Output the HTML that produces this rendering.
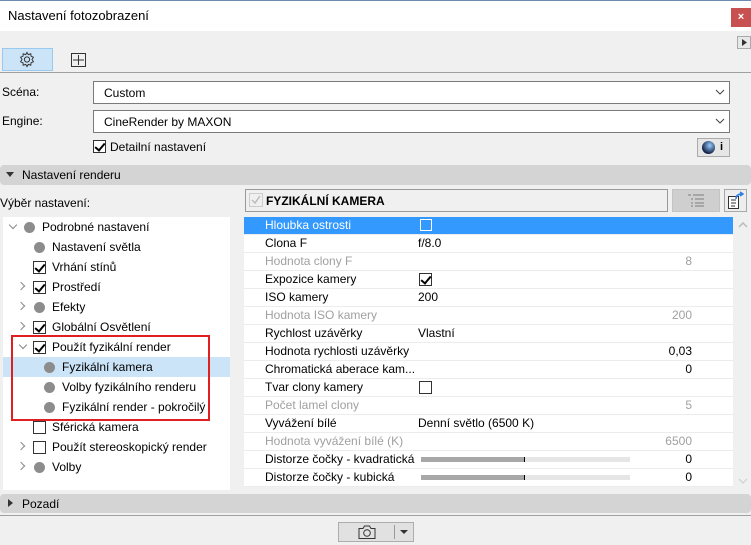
<!DOCTYPE html>
<html><head><meta charset="utf-8"><style>
*{margin:0;padding:0;box-sizing:border-box}
body{width:751px;height:545px;background:#f0f0f0;font-family:"Liberation Sans","DejaVu Sans",sans-serif;font-size:12px;color:#000;position:relative;overflow:hidden}
.a{position:absolute}
.dd{position:absolute;left:93px;width:637px;height:23px;background:#fff;border:1px solid #7a7a7a;padding:4px 0 0 10px}
.dd svg{position:absolute;right:4px;top:7px}
.cb{position:absolute;width:13px;height:13px;border:1px solid #333;background:#fff}
.cb.k::after{content:"";position:absolute;left:3px;top:0px;width:4px;height:8px;border:solid #000;border-width:0 2px 2px 0;transform:rotate(40deg)}
.dot{position:absolute;width:11px;height:11px;border-radius:50%;background:#8c8c8c}
.chev{position:absolute;width:6px;height:6px;border:solid #888;border-width:0 1.5px 1.5px 0}
.tr{position:absolute;height:20px;line-height:20px}
.row{position:absolute;left:244px;width:489px;height:18px;border-bottom:1px solid #ececec;line-height:17px}
.row .l{position:absolute;left:21px}
.row .v{position:absolute;left:174px}
.row .r{position:absolute;right:41px}
.g{color:#a0a0a0}
</style></head><body>
<div class="a" style="left:0;top:0;width:751px;height:1px;background:#6b8cae"></div>
<div class="a" style="left:0;top:1px;width:751px;height:30px;background:#fff"></div>
<div class="a" style="left:8px;top:8px;font-size:13px">Nastavení fotozobrazení</div>
<div class="a" style="left:731px;top:8px;width:20px;height:19px;background:#c75050;color:#fff;font-weight:bold;text-align:center;line-height:18px;font-size:11px">×</div>
<div class="a" style="left:737px;top:36px;width:14px;height:13px;border:1px solid #aaa;background:#e8e8e8"><svg width="12" height="11"><path d="M4 2 L9 5.5 L4 9Z" fill="#333"/></svg></div>
<div class="a" style="left:2px;top:48px;width:51px;height:23px;background:#cce4f7;border:1px solid #99c9ef"></div>
<svg class="a" style="left:18px;top:51px" width="18" height="17" viewBox="0 0 18 17"><circle cx="9" cy="8.5" r="2.6" fill="none" stroke="#333"/><path d="M9 1.5 L10.3 3.6 12.8 2.8 13 5.2 15.4 6.2 14 8.5 15.4 10.8 13 11.8 12.8 14.2 10.3 13.4 9 15.5 7.7 13.4 5.2 14.2 5 11.8 2.6 10.8 4 8.5 2.6 6.2 5 5.2 5.2 2.8 7.7 3.6Z" fill="none" stroke="#333"/></svg>
<svg class="a" style="left:70px;top:52px" width="18" height="16"><rect x="1.5" y="1.5" width="14" height="13" fill="none" stroke="#333"/><path d="M8.5 3v10M3 8h11" stroke="#333"/></svg>
<div class="a" style="left:0;top:72px;width:751px;height:1px;background:#a0a0a0"></div>
<div class="a" style="left:2px;top:85px">Scéna:</div>
<div class="dd" style="top:81px">Custom<svg width="10" height="6"><path d="M1 1l4 4 4-4" fill="none" stroke="#444"/></svg></div>
<div class="a" style="left:2px;top:114px">Engine:</div>
<div class="dd" style="top:110px">CineRender by MAXON<svg width="10" height="6"><path d="M1 1l4 4 4-4" fill="none" stroke="#444"/></svg></div>
<div class="cb k" style="left:93px;top:140px"></div>
<div class="a" style="left:110px;top:140px">Detailní nastavení</div>
<div class="a" style="left:697px;top:138px;width:33px;height:19px;border:1px solid #aaa;background:#e6e6e6"><div class="a" style="left:4px;top:2px;width:13px;height:13px;border-radius:50%;background:radial-gradient(circle at 60% 35%,#9cf,#124 70%)"></div><div class="a" style="left:22px;top:2px;font-weight:bold;font-size:11px">i</div></div>
<div class="a" style="left:0;top:165px;width:751px;height:20px;background:#d4d4d4;border-radius:4px"></div>
<svg class="a" style="left:6px;top:172px" width="8" height="6"><path d="M0 0h8L4 5z" fill="#333"/></svg>
<div class="a" style="left:22px;top:168px">Nastavení renderu</div>
<div class="a" style="left:0;top:196px">Výběr nastavení:</div>
<div class="a" style="left:245px;top:189px;width:423px;height:23px;border:1px solid #9a9a9a;background:#f0f0f0"></div>
<svg class="a" style="left:249px;top:193px" width="14" height="14"><rect x=".5" y=".5" width="13" height="13" fill="none" stroke="#ccc"/><path d="M3 7l3 3 5-7" fill="none" stroke="#bbb" stroke-width="1.5"/></svg>
<div class="a" style="left:266px;top:194px;font-weight:bold">FYZIKÁLNÍ KAMERA</div>
<div class="a" style="left:672px;top:189px;width:48px;height:23px;background:#cfcfcf;border:1px solid #c4c4c4"></div>
<svg class="a" style="left:688px;top:194px" width="18" height="14"><path d="M0 1h3M5 1h11M3 5h2M7 5h9M3 9h2M7 9h9M3 12h2M7 12h9" stroke="#999" stroke-width="1.5"/></svg>
<div class="a" style="left:724px;top:189px;width:23px;height:23px;border:1px solid #a8a8a8;background:#eee"></div>
<svg class="a" style="left:727px;top:191px" width="18" height="19"><rect x="1.5" y="5.5" width="10" height="12" fill="#fff" stroke="#333"/><path d="M4 9h5M4 12h5M4 15h4" stroke="#333"/><path d="M9 8c0-4 3-5 6-5M13 1l3 2-3 2" fill="none" stroke="#2a7de1" stroke-width="1.5"/></svg>
<!-- tree -->
<div class="a" style="left:3px;top:217px;width:227px;height:273px;background:#fff"></div>
<div class="a" style="left:3px;top:357px;width:227px;height:20px;background:#cce4f7"></div>
<div class="chev" style="left:10px;top:222px;transform:rotate(45deg)"></div><div class="dot" style="left:24px;top:222px"></div><div class="tr" style="left:42px;top:217px">Podrobné nastavení</div>
<div class="dot" style="left:34px;top:242px"></div><div class="tr" style="left:52px;top:237px">Nastavení světla</div>
<div class="cb k" style="left:33px;top:261px"></div><div class="tr" style="left:52px;top:257px">Vrhání stínů</div>
<div class="chev" style="left:18px;top:283px;transform:rotate(-45deg)"></div><div class="cb k" style="left:33px;top:281px"></div><div class="tr" style="left:52px;top:277px">Prostředí</div>
<div class="chev" style="left:18px;top:303px;transform:rotate(-45deg)"></div><div class="dot" style="left:34px;top:302px"></div><div class="tr" style="left:52px;top:297px">Efekty</div>
<div class="chev" style="left:18px;top:323px;transform:rotate(-45deg)"></div><div class="cb k" style="left:33px;top:321px"></div><div class="tr" style="left:52px;top:317px">Globální Osvětlení</div>
<div class="chev" style="left:20px;top:342px;transform:rotate(45deg)"></div><div class="cb k" style="left:33px;top:341px"></div><div class="tr" style="left:52px;top:337px">Použít fyzikální render</div>
<div class="dot" style="left:44px;top:362px"></div><div class="tr" style="left:62px;top:357px">Fyzikální kamera</div>
<div class="dot" style="left:44px;top:382px"></div><div class="tr" style="left:62px;top:377px">Volby fyzikálního renderu</div>
<div class="dot" style="left:44px;top:402px"></div><div class="tr" style="left:62px;top:397px">Fyzikální render - pokročilý</div>
<div class="a" style="left:11px;top:335px;width:199px;height:86px;border:2px solid #e02020"></div>
<div class="cb" style="left:33px;top:421px"></div><div class="tr" style="left:52px;top:417px">Sférická kamera</div>
<div class="chev" style="left:18px;top:443px;transform:rotate(-45deg)"></div><div class="cb" style="left:33px;top:441px"></div><div class="tr" style="left:52px;top:437px">Použít stereoskopický render</div>
<div class="chev" style="left:18px;top:463px;transform:rotate(-45deg)"></div><div class="dot" style="left:34px;top:462px"></div><div class="tr" style="left:52px;top:457px">Volby</div>
<!-- props -->
<div class="a" style="left:244px;top:217px;width:489px;height:270px;background:#fff"></div>
<div class="row" style="top:217px;background:#3399ff;color:#fff"><span class="l">Hloubka ostrosti</span><span class="a" style="left:176px;top:2px;width:12px;height:12px;border:1px solid #fff"></span></div>
<div class="row" style="top:235px"><span class="l">Clona F</span><span class="v">f/8.0</span></div>
<div class="row g" style="top:253px"><span class="l">Hodnota clony F</span><span class="r">8</span></div>
<div class="row" style="top:271px"><span class="l">Expozice kamery</span><span class="cb k" style="left:175px;top:2px"></span></div>
<div class="row" style="top:289px"><span class="l">ISO kamery</span><span class="v">200</span></div>
<div class="row g" style="top:307px"><span class="l">Hodnota ISO kamery</span><span class="r">200</span></div>
<div class="row" style="top:325px"><span class="l">Rychlost uzávěrky</span><span class="v">Vlastní</span></div>
<div class="row" style="top:343px"><span class="l">Hodnota rychlosti uzávěrky</span><span class="r">0,03</span></div>
<div class="row" style="top:361px"><span class="l">Chromatická aberace kam...</span><span class="r">0</span></div>
<div class="row" style="top:379px"><span class="l">Tvar clony kamery</span><span class="cb" style="left:175px;top:2px"></span></div>
<div class="row g" style="top:397px"><span class="l">Počet lamel clony</span><span class="r">5</span></div>
<div class="row" style="top:415px"><span class="l">Vyvážení bílé</span><span class="v">Denní světlo (6500 K)</span></div>
<div class="row g" style="top:433px"><span class="l">Hodnota vyvážení bílé (K)</span><span class="r">6500</span></div>
<div class="row" style="top:451px"><span class="l">Distorze čočky - kvadratická</span><span class="a" style="left:177px;top:6px;width:209px;height:5px;background:#e6e6e6"><span class="a" style="left:0;top:0;width:104px;height:5px;background:#a8a8a8;border-right:1px solid #000"></span></span><span class="r">0</span></div>
<div class="row" style="top:469px"><span class="l">Distorze čočky - kubická</span><span class="a" style="left:177px;top:6px;width:209px;height:5px;background:#e6e6e6"><span class="a" style="left:0;top:0;width:104px;height:5px;background:#a8a8a8;border-right:1px solid #000"></span></span><span class="r">0</span></div>
<svg class="a" style="left:738px;top:222px" width="10" height="6"><path d="M1 5l4-4 4 4" fill="none" stroke="#bbb" stroke-width="1.5"/></svg>
<svg class="a" style="left:738px;top:478px" width="10" height="6"><path d="M1 1l4 4 4-4" fill="none" stroke="#ccc"/></svg>
<div class="a" style="left:0;top:494px;width:751px;height:19px;background:#d4d4d4;border-radius:4px"></div>
<svg class="a" style="left:8px;top:499px" width="6" height="8"><path d="M0 0v8l5-4z" fill="#333"/></svg>
<div class="a" style="left:22px;top:497px">Pozadí</div>
<div class="a" style="left:0;top:515px;width:751px;height:1px;background:#a0a0a0"></div>
<div class="a" style="left:338px;top:522px;width:76px;height:20px;background:#e1e1e1;border:1px solid #adadad"></div>
<svg class="a" style="left:357px;top:523px" width="20" height="17"><path d="M2 5.5h4l1.5-2.5h5l1.5 2.5h4v10h-16z" fill="none" stroke="#333"/><circle cx="10" cy="10" r="3.3" fill="none" stroke="#333"/></svg>
<div class="a" style="left:394px;top:525px;width:1px;height:14px;background:#999"></div>
<svg class="a" style="left:400px;top:530px" width="8" height="5"><path d="M0 0h8L4 4z" fill="#333"/></svg>
</body></html>
